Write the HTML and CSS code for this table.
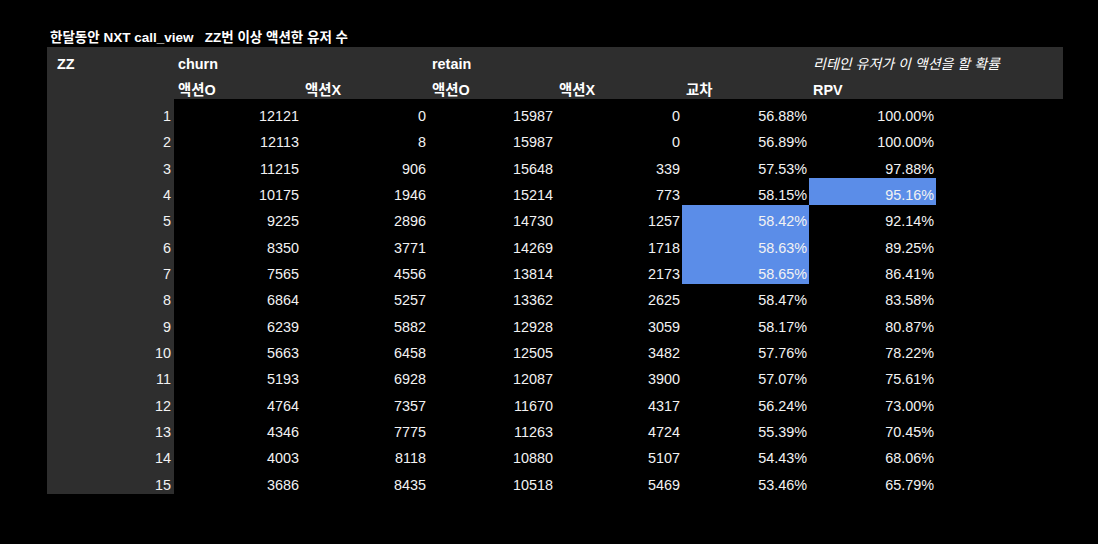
FILE: index.html
```html
<!DOCTYPE html>
<html lang="ko">
<head>
<meta charset="utf-8">
<title>NXT call_view</title>
<link rel="stylesheet" href="styles.css">
</head>
<body>
<div class="page">
  <div class="title">한달동안 NXT call_view   ZZ번 이상 액션한 유저 수</div>
  <div class="sheet">
    <div class="h h1 zz">ZZ</div>
    <div class="h h1">churn</div>
    <div class="h h1"></div>
    <div class="h h1">retain</div>
    <div class="h h1"></div>
    <div class="h h1"></div>
    <div class="h h1 note">리테인 유저가 이 액션을 할 확률</div>
    <div class="h h1"></div>

    <div class="h h2 zz"></div>
    <div class="h h2">액션O</div>
    <div class="h h2">액션X</div>
    <div class="h h2">액션O</div>
    <div class="h h2">액션X</div>
    <div class="h h2">교차</div>
    <div class="h h2">RPV</div>
    <div class="h h2"></div>

    <div class="c idx">1</div><div class="c">12121</div><div class="c">0</div><div class="c">15987</div><div class="c">0</div><div class="c">56.88%</div><div class="c">100.00%</div><div class="c"></div>
    <div class="c idx">2</div><div class="c">12113</div><div class="c">8</div><div class="c">15987</div><div class="c">0</div><div class="c">56.89%</div><div class="c">100.00%</div><div class="c"></div>
    <div class="c idx">3</div><div class="c">11215</div><div class="c">906</div><div class="c">15648</div><div class="c">339</div><div class="c">57.53%</div><div class="c">97.88%</div><div class="c"></div>
    <div class="c idx">4</div><div class="c">10175</div><div class="c">1946</div><div class="c">15214</div><div class="c">773</div><div class="c">58.15%</div><div class="c hl">95.16%</div><div class="c"></div>
    <div class="c idx">5</div><div class="c">9225</div><div class="c">2896</div><div class="c">14730</div><div class="c">1257</div><div class="c hl">58.42%</div><div class="c">92.14%</div><div class="c"></div>
    <div class="c idx">6</div><div class="c">8350</div><div class="c">3771</div><div class="c">14269</div><div class="c">1718</div><div class="c hl">58.63%</div><div class="c">89.25%</div><div class="c"></div>
    <div class="c idx">7</div><div class="c">7565</div><div class="c">4556</div><div class="c">13814</div><div class="c">2173</div><div class="c hl">58.65%</div><div class="c">86.41%</div><div class="c"></div>
    <div class="c idx">8</div><div class="c">6864</div><div class="c">5257</div><div class="c">13362</div><div class="c">2625</div><div class="c">58.47%</div><div class="c">83.58%</div><div class="c"></div>
    <div class="c idx">9</div><div class="c">6239</div><div class="c">5882</div><div class="c">12928</div><div class="c">3059</div><div class="c">58.17%</div><div class="c">80.87%</div><div class="c"></div>
    <div class="c idx">10</div><div class="c">5663</div><div class="c">6458</div><div class="c">12505</div><div class="c">3482</div><div class="c">57.76%</div><div class="c">78.22%</div><div class="c"></div>
    <div class="c idx">11</div><div class="c">5193</div><div class="c">6928</div><div class="c">12087</div><div class="c">3900</div><div class="c">57.07%</div><div class="c">75.61%</div><div class="c"></div>
    <div class="c idx">12</div><div class="c">4764</div><div class="c">7357</div><div class="c">11670</div><div class="c">4317</div><div class="c">56.24%</div><div class="c">73.00%</div><div class="c"></div>
    <div class="c idx">13</div><div class="c">4346</div><div class="c">7775</div><div class="c">11263</div><div class="c">4724</div><div class="c">55.39%</div><div class="c">70.45%</div><div class="c"></div>
    <div class="c idx">14</div><div class="c">4003</div><div class="c">8118</div><div class="c">10880</div><div class="c">5107</div><div class="c">54.43%</div><div class="c">68.06%</div><div class="c"></div>
    <div class="c idx">15</div><div class="c">3686</div><div class="c">8435</div><div class="c">10518</div><div class="c">5469</div><div class="c">53.46%</div><div class="c">65.79%</div><div class="c"></div>
  </div>
</div>
</body>
</html>
```

FILE: styles.css
```css
html, body {
  margin: 0;
  padding: 0;
  background: #000;
}

body {
  font-family: "Liberation Sans", Arial, "Noto Sans CJK KR", sans-serif;
  color: #f2f2f2;
}

.page {
  padding: 30px 0 0 47px;
}

.title {
  white-space: pre;
  font-weight: bold;
  font-size: 13.5px;
  line-height: 16px;
  padding-left: 3px;
  margin-bottom: 1px;
  color: #fff;
}

.sheet {
  display: grid;
  grid-template-columns: repeat(8, 127px);
  grid-template-rows: 30px 22.3px repeat(15, 26.34px);
  width: 1016px;
  font-size: 14.4px;
  line-height: 16px;
}

.h {
  background: #2e2e2e;
  font-weight: bold;
  color: #fff;
  display: flex;
  align-items: flex-end;
  padding-left: 4px;
  white-space: nowrap;
  overflow: visible;
}

.h1 {
  padding-bottom: 5px;
}

.h2 {
  padding-bottom: 1px;
}

.zz {
  padding-left: 10px;
}

.note {
  font-weight: normal;
  font-style: italic;
  font-size: 14px;
  position: relative;
  z-index: 1;
}

.c {
  display: flex;
  align-items: flex-end;
  justify-content: flex-end;
  padding: 0 2px 1.5px 0;
  color: #f2f2f2;
}

.idx {
  background: #2e2e2e;
  padding-right: 3px;
}

.hl {
  background: #5b8de8;
}
```
